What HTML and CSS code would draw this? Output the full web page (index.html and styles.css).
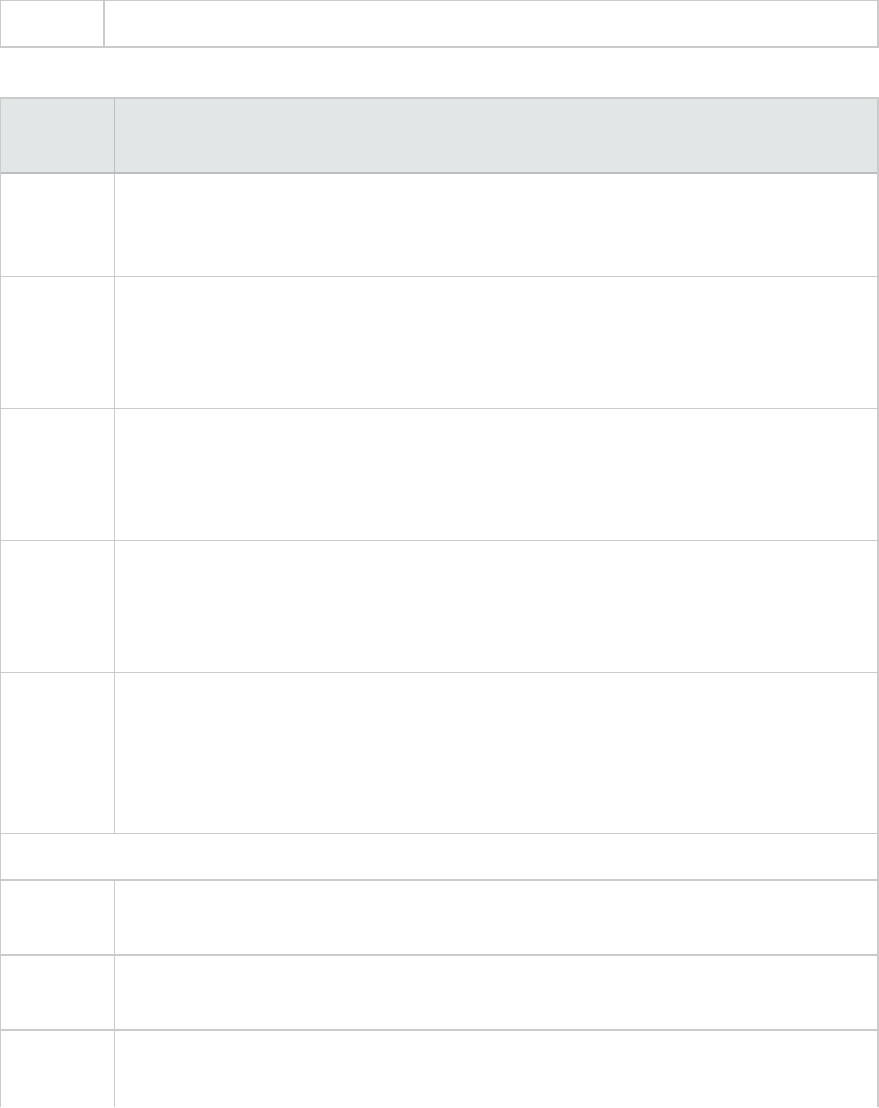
FILE: index.html
```html
<!DOCTYPE html>
<html>
<head>
<meta charset="utf-8">
<link rel="stylesheet" href="styles.css">
</head>
<body>
<div class="t1">
  <div class="t1-key"></div>
  <div class="t1-val"></div>
</div>
<div class="t2">
  <div class="row head"><div class="c1"></div><div class="c2"></div></div>
  <div class="row h102"><div class="c1"></div><div class="c2"></div></div>
  <div class="row h131"><div class="c1"></div><div class="c2"></div></div>
  <div class="row h131"><div class="c1"></div><div class="c2"></div></div>
  <div class="row h131"><div class="c1"></div><div class="c2"></div></div>
  <div class="row h160"><div class="c1"></div><div class="c2"></div></div>
  <div class="row section"><div class="full"></div></div>
  <div class="row h73 thick"><div class="c1"></div><div class="c2"></div></div>
  <div class="row h73 thick"><div class="c1"></div><div class="c2"></div></div>
  <div class="row h76 last"><div class="c1"></div><div class="c2"></div></div>
</div>
</body>
</html>
```
FILE: styles.css
```css
* { box-sizing: border-box; }
html, body { margin: 0; padding: 0; background: #fff; }
body { width: 879px; font-family: "Liberation Sans", Arial, sans-serif; }

.t1 {
  display: grid;
  grid-template-columns: 104px 1fr;
  height: 48px;
  border-top: 1px solid #cbcbcb;
  border-left: 1px solid #cbcbcb;
  border-right: 2px solid #cbcbcb;
  border-bottom: 2px solid #cbcbcb;
}
.t1-key { border-right: 2px solid #cbcbcb; }

.t2 {
  margin-top: 49px;
  border-top: 2px solid #cbcbcb;
  border-left: 1px solid #cbcbcb;
  border-right: 2px solid #cbcbcb;
}
.row {
  display: grid;
  grid-template-columns: 114px 1fr;
  border-bottom: 1px solid #cbcbcb;
}
.row .c1 { border-right: 1px solid #cbcbcb; }
.row.head {
  height: 75px;
  background: #e3e6e7;
  border-bottom: 2px solid #bcbdbe;
}
.row.head .c1 { border-right-color: #bcbdbe; }
.h102 { height: 103px; }
.h131 { height: 132px; }
.h160 { height: 161px; }
.row.section {
  grid-template-columns: 1fr;
  height: 47px;
  border-bottom: 2px solid #cbcbcb;
}
.h73 { height: 75px; }
.row.thick { border-bottom: 2px solid #cbcbcb; }
.h76 { height: 76px; }
.row.last { border-bottom: 0; }
```
